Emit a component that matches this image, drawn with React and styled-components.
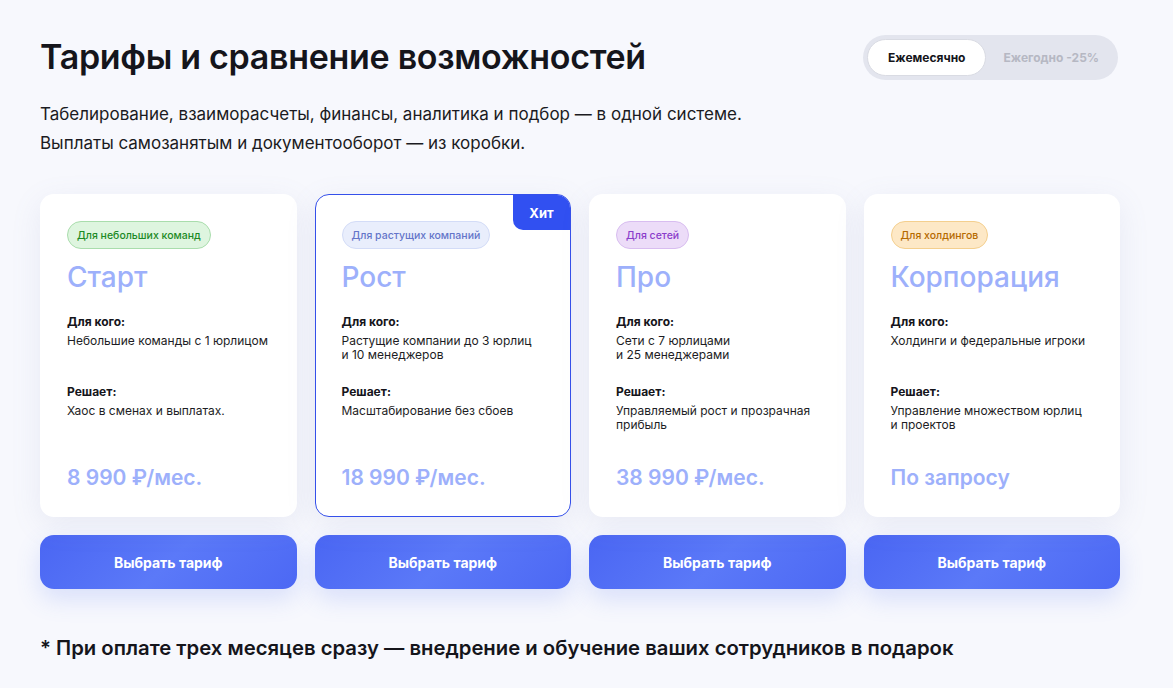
import styled, { createGlobalStyle } from "styled-components";

const GlobalStyle = createGlobalStyle`
  html, body {
    margin: 0;
    padding: 0;
    background: #f7f8fd;
  }
  body {
    font-family: Inter, "Noto Sans", sans-serif;
    color: #16161d;
  }
  * { box-sizing: border-box; }
`;

const plans = [
  {
    tag: "Для небольших команд",
    tone: "green",
    name: "Старт",
    who: ["Небольшие команды с 1 юрлицом"],
    solves: ["Хаос в сменах и выплатах."],
    price: "8 990 ₽/мес.",
  },
  {
    tag: "Для растущих компаний",
    tone: "blue",
    name: "Рост",
    who: ["Растущие компании до 3 юрлиц", "и 10 менеджеров"],
    solves: ["Масштабирование без сбоев"],
    price: "18 990 ₽/мес.",
    hit: true,
  },
  {
    tag: "Для сетей",
    tone: "purple",
    name: "Про",
    who: ["Сети с 7 юрлицами", "и 25 менеджерами"],
    solves: ["Управляемый рост и прозрачная", "прибыль"],
    price: "38 990 ₽/мес.",
  },
  {
    tag: "Для холдингов",
    tone: "orange",
    name: "Корпорация",
    who: ["Холдинги и федеральные игроки"],
    solves: ["Управление множеством юрлиц", "и проектов"],
    price: "По запросу",
  },
];

const tones = {
  green: { bg: "#def5df", border: "#a9ddac", color: "#1c8a25" },
  blue: { bg: "#e9eefc", border: "#d3dcf7", color: "#6475c9" },
  purple: { bg: "#ecdcf8", border: "#d8bdf0", color: "#8b3ccb" },
  orange: { bg: "#fde8c6", border: "#f4cf8e", color: "#b56a00" },
};

const Page = styled.main`
  width: 1173px;
  min-height: 688px;
  padding: 34px 53px 0 40px;
`;

const Header = styled.header`
  display: flex;
  justify-content: space-between;
  align-items: flex-start;
`;

const Title = styled.h1`
  margin: 1px 0 0;
  font-size: 34px;
  font-weight: 600;
  letter-spacing: -0.3px;
  line-height: 44px;
  color: #15151b;
`;

const Toggle = styled.div`
  display: flex;
  align-items: center;
  gap: 2px;
  height: 45px;
  padding: 4px 4px;
  border-radius: 23px;
  background: #e3e5ee;
  margin: 1px 2px 0 0;
`;

const ToggleOption = styled.button`
  height: 37px;
  padding: 0 ${(p) => (p.$active ? "20px" : "14px")};
  border-radius: 19px;
  border: 1px solid ${(p) => (p.$active ? "#d9dbe3" : "transparent")};
  background: ${(p) => (p.$active ? "#ffffff" : "transparent")};
  color: ${(p) => (p.$active ? "#15151b" : "#b6b8c3")};
  font-family: inherit;
  font-size: 12px;
  font-weight: 700;
  cursor: pointer;
`;

const Lead = styled.p`
  margin: 20px 0 0;
  font-size: 17px;
  line-height: 29px;
  color: #1b1b22;
`;

const Grid = styled.section`
  margin-top: 36px;
  display: grid;
  grid-template-columns: repeat(4, 1fr);
  column-gap: 18px;
`;

const Column = styled.div`
  display: flex;
  flex-direction: column;
  gap: 18px;
`;

const Card = styled.article`
  position: relative;
  height: 323px;
  border-radius: 14px;
  background: #ffffff;
  border: 1px solid ${(p) => (p.$hit ? "#3550ea" : "transparent")};
  box-shadow: 0 8px 30px rgba(120, 130, 180, 0.12);
  padding: 26px 26px 0;
  overflow: hidden;
  display: flex;
  flex-direction: column;
  align-items: flex-start;
`;

const Hit = styled.span`
  position: absolute;
  top: 0;
  right: 0;
  width: 57px;
  height: 35px;
  background: #3150f1;
  color: #fff;
  font-size: 13px;
  font-weight: 700;
  display: flex;
  align-items: center;
  justify-content: center;
  border-bottom-left-radius: 10px;
`;

const Tag = styled.span`
  height: 28px;
  padding: 0 9px;
  display: inline-flex;
  align-items: center;
  border-radius: 14px;
  font-size: 10.5px;
  font-weight: 500;
  background: ${(p) => tones[p.$tone].bg};
  border: 1px solid ${(p) => tones[p.$tone].border};
  color: ${(p) => tones[p.$tone].color};
`;

const PlanName = styled.h2`
  margin: 11px 0 0;
  font-size: 28px;
  line-height: 34px;
  font-weight: 500;
  color: #9db0fb;
`;

const Label = styled.div`
  margin-top: ${(p) => p.$gap}px;
  font-size: 12px;
  font-weight: 700;
  color: #15151b;
  line-height: 16px;
`;

const Text = styled.div`
  margin-top: 4px;
  min-height: ${(p) => p.$min || 0}px;
  font-size: 12px;
  line-height: 14px;
  white-space: nowrap;
  color: #1d1d24;
`;

const Price = styled.div`
  margin-top: auto;
  margin-bottom: 26px;
  font-size: 21px;
  font-weight: 600;
  color: #9db0fb;
`;

const ChooseButton = styled.button`
  height: 54px;
  border: none;
  border-radius: 14px;
  background: linear-gradient(135deg, #4a66f3 0%, #5b79f8 50%, #4c68f4 100%);
  box-shadow: 0 10px 24px rgba(80, 110, 240, 0.18);
  color: #fff;
  font-family: inherit;
  font-size: 14px;
  font-weight: 700;
  cursor: pointer;
`;

const Note = styled.p`
  margin: 46px 0 0;
  font-size: 20.3px;
  font-weight: 600;
  color: #15151b;
`;

export default function App() {
  return (
    <>
      <GlobalStyle />
      <Page>
        <Header>
          <Title>Тарифы и сравнение возможностей</Title>
          <Toggle>
            <ToggleOption $active>Ежемесячно</ToggleOption>
            <ToggleOption>Ежегодно -25%</ToggleOption>
          </Toggle>
        </Header>
        <Lead>
          Табелирование, взаиморасчеты, финансы, аналитика и подбор — в одной системе.
          <br />
          Выплаты самозанятым и документооборот — из коробки.
        </Lead>
        <Grid>
          {plans.map((p) => (
            <Column key={p.name}>
              <Card $hit={p.hit}>
                {p.hit && <Hit>Хит</Hit>}
                <Tag $tone={p.tone}>{p.tag}</Tag>
                <PlanName>{p.name}</PlanName>
                <Label $gap={20}>Для кого:</Label>
                <Text $min={34}>
                  {p.who.map((l) => (
                    <div key={l}>{l}</div>
                  ))}
                </Text>
                <Label $gap={16}>Решает:</Label>
                <Text>
                  {p.solves.map((l) => (
                    <div key={l}>{l}</div>
                  ))}
                </Text>
                <Price>{p.price}</Price>
              </Card>
              <ChooseButton>Выбрать тариф</ChooseButton>
            </Column>
          ))}
        </Grid>
        <Note>
          * При оплате трех месяцев сразу — внедрение и обучение ваших сотрудников в подарок
        </Note>
      </Page>
    </>
  );
}
